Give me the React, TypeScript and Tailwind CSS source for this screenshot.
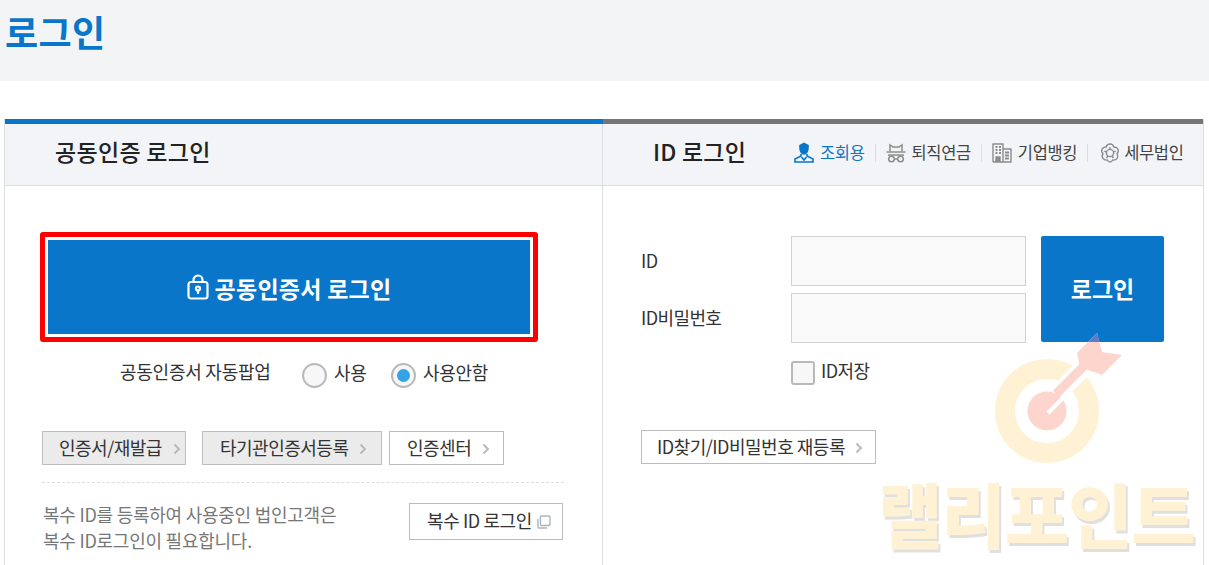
const font = "[font-family:'Noto_Sans_CJK_KR','Liberation_Sans',sans-serif]";

function Chevron() {
  return (
    <svg width="8" height="12" viewBox="0 0 8 12" className="mt-[2px] shrink-0" fill="none" stroke="#b4b8bd" strokeWidth="1.8">
      <path d="M1.5 1.5 6 6l-4.500 4.500" />
    </svg>
  );
}

function LinkButton({ label, gray, className }: { label: string; gray?: boolean; className: string }) {
  return (
    <div className={`flex h-[34px] items-center border border-[#bdbdbd] text-[18px] tracking-[-0.5px] text-[#333] ${gray ? "bg-[#ebebeb]" : "bg-white"} ${className}`}>
      <span className="mb-[2px] whitespace-nowrap">{label}</span>
      <Chevron />
    </div>
  );
}

function Radio({ on, label, className }: { on?: boolean; label: string; className: string }) {
  return (
    <div className={`flex items-center gap-[7px] ${className}`}>
      <span className="mt-[3px] flex size-[25px] items-center justify-center rounded-full border-2 border-[#b9b9b9] bg-[#f7f7f7]">
        {on && <span className="size-[13px] rounded-full bg-[#36a3e6]" />}
      </span>
      <span className="mb-[3px] text-[18px] tracking-[-0.3px] text-[#333]">{label}</span>
    </div>
  );
}

function Divider() {
  return <span className="mx-[10px] h-[18px] w-px bg-[#dcdde0]" />;
}

export default function App() {
  return (
    <div className={`relative h-[565px] w-[1209px] overflow-hidden bg-white ${font}`}>
      <header className="h-[81px] bg-[#f3f4f6] pl-[5px] pt-[8px] text-[36px] font-bold leading-[46px] tracking-[0.4px] text-[#0976c9]">
        로그인
      </header>

      <main className="ml-[4px] mt-[38px] h-[446px] w-[1200px] border-x border-[#dcdde0]">
        <div className="flex h-[5px]">
          <div className="w-[598px] bg-[#0976c9]" />
          <div className="flex-1 bg-[#757575]" />
        </div>
        <div className="flex h-[62px] border-b border-[#dcdde0] bg-[#f3f4f7]">
          <div className="flex w-[598px] items-center border-r border-[#dcdde0] pb-[7px] pl-[50px] text-[23px] font-medium tracking-[0.3px] text-[#222]">
            공동인증 로그인
          </div>
          <div className="flex flex-1 items-center pb-[4px] pl-[50px]">
            <span className="mb-[3px] w-[141px] text-[23px] font-medium tracking-[0.2px] text-[#222]">ID 로그인</span>
            <div className="flex items-center text-[16.500px] tracking-[-0.35px] text-[#444]">
              <span className="flex items-center gap-[6px] text-[#0976c9]">
                <svg width="20" height="21" viewBox="0 0 20 21" fill="none" stroke="#0976c9" strokeWidth="1.6">
                  <path d="M6 6V3.500L10 1.500 14 3.500V6c0 3-1.500 6-4 6S6 9 6 6Z" fill="#0976c9" />
                  <path d="M7 12v2l-6 3v3h18v-3l-6-3v-2" />
                  <path d="M7.500 15 10 18l2.500-3" />
                </svg>
                조회용
              </span>
              <Divider />
              <span className="flex items-center gap-[6px]">
                <svg width="20" height="20" viewBox="0 0 20 20" fill="none" stroke="#8c8c8c" strokeWidth="1.500">
                  <path d="M4 8V2l3 2h6l3-2v6" />
                  <path d="M0.500 9h19M2 12h16" />
                  <circle cx="5.500" cy="16" r="2.800" />
                  <circle cx="14.500" cy="16" r="2.800" />
                  <path d="M8.300 16h3.400" />
                </svg>
                퇴직연금
              </span>
              <Divider />
              <span className="flex items-center gap-[6px]">
                <svg width="20" height="20" viewBox="0 0 20 20" fill="none" stroke="#8c8c8c" strokeWidth="1.400">
                  <path d="M1 19V1h10v18M11 6h8v13H1" />
                  <path d="M3.500 4h2M7 4h2M3.500 7h2M7 7h2M3.500 10h2M7 10h2M13 9.500h4M13 12.500h4M13 15.500h4" strokeWidth="1.800" />
                  <path d="M4 19v-5h4v5" fill="#8c8c8c" />
                </svg>
                기업뱅킹
              </span>
              <Divider />
              <span className="ml-[2px] flex items-center gap-[4px]">
                <svg width="20" height="20" viewBox="0 0 20 20" fill="none" stroke="#8c8c8c" strokeWidth="1.400">
                  <path d="M10 1c2 0 3.400 1.200 3.800 3 1.800-.2 3.400.6 4.200 2.300.7 1.700.2 3.300-1 4.500 1 1.400 1.100 3.100.1 4.600-1.100 1.500-2.700 2-4.400 1.600C12 18.500 11 19 10 19s-2-.5-2.700-2c-1.700.4-3.300-.1-4.400-1.600-1-1.500-.9-3.200.1-4.600-1.200-1.200-1.700-2.800-1-4.500C2.800 4.600 4.400 3.800 6.200 4 6.600 2.200 8 1 10 1Z" />
                  <circle cx="10" cy="10" r="3.600" />
                  <path d="M10 6.400V4M13.400 9l2.300-.8M12.100 13l1.400 2M7.900 13l-1.400 2M6.600 9l-2.300-.8" />
                </svg>
                세무법인
              </span>
            </div>
          </div>
        </div>

        <div className="flex h-[379px]">
          <section className="w-[598px] border-r border-[#dcdde0] pl-[35px] pr-[38px] pt-[46px]">
            <div className="flex h-[110px] w-[498px] items-center justify-center gap-[6px] rounded-[3px] border-[5px] border-[#ff0000] bg-[#0976c9] text-[23px] font-bold tracking-[0.25px] text-white shadow-[inset_0_0_0_3px_#ffffff]">
              <svg width="22" height="26" viewBox="0 0 22 26" fill="none" stroke="#ffffff" strokeWidth="2.200">
                <rect x="1.500" y="8" width="19" height="16.500" rx="2.500" />
                <path d="M6.500 8V6a4.500 4.500 0 0 1 9 0v2" />
                <circle cx="11" cy="14.500" r="2" />
                <path d="M11 16.500v3.500" />
              </svg>
              <span className="pt-[2px]">공동인증서 로그인</span>
            </div>

            <div className="mt-[10px] flex h-[44px] items-center">
              <span className="mb-[5px] ml-[80px] w-[182px] whitespace-nowrap text-[18px] tracking-[-0.25px] text-[#333]">공동인증서 자동팝업</span>
              <Radio label="사용" className="w-[89px]" />
              <Radio on label="사용안함" className="" />
            </div>

            <div className="ml-[2px] mt-[35px] flex">
              <LinkButton gray label="인증서/재발급" className="w-[144px] gap-[11px] pl-[16px]" />
              <LinkButton gray label="타기관인증서등록" className="ml-[16px] w-[180px] gap-[11px] pl-[17px]" />
              <LinkButton label="인증센터" className="ml-[7px] w-[115px] gap-[11px] pl-[17px]" />
            </div>

            <div className="ml-[2px] mt-[17px] w-[522px] border-t border-dashed border-[#dddddd]" />

            <div className="ml-[3px] mt-[20px] flex w-[520px] justify-between">
              <p className="mt-[-2px] text-[18px] leading-[26px] tracking-[-0.25px] text-[#777]">
                복수 ID를 등록하여 사용중인 법인고객은
                <br />
                복수 ID로그인이 필요합니다.
              </p>
              <div className="flex h-[37px] w-[154px] items-center gap-[5px] border border-[#bdbdbd] bg-white pl-[17px] text-[18px] tracking-[-0.4px] text-[#333]">
                <span className="mb-[2px]">복수 ID 로그인</span>
                <svg width="14" height="14" viewBox="0 0 14 14" fill="none" stroke="#a9b4bf" strokeWidth="1.400">
                  <rect x="3.500" y="1" width="9.500" height="9.500" rx="1" />
                  <path d="M1 4v8a1 1 0 0 0 1 1h8" />
                </svg>
              </div>
            </div>
          </section>

          <section className="flex-1 pl-[38px] pt-[50px]">
            <div className="flex">
              <div className="w-[150px] text-[18px] tracking-[-0.6px] text-[#333]">
                <div className="flex h-[50px] items-center pb-[2px]">ID</div>
                <div className="mt-[7px] flex h-[50px] items-center pb-[2px]">ID비밀번호</div>
              </div>
              <div className="flex w-[235px] flex-col gap-[7px]">
                <div className="h-[50px] border border-[#d2d2d2] bg-[#f9f9f9]" />
                <div className="h-[50px] border border-[#d2d2d2] bg-[#f9f9f9]" />
              </div>
              <div className="ml-[15px] flex h-[106px] w-[123px] items-center justify-center rounded-[2px] bg-[#0976c9] pb-[2px] text-[23px] font-bold text-white">
                로그인
              </div>
            </div>
            <div className="ml-[150px] mt-[14px] flex items-center gap-[6px]">
              <span className="size-[24px] rounded-[3px] border-2 border-[#b9b9b9] bg-[#f7f7f7]" />
              <span className="mb-[5px] text-[18px] tracking-[-0.6px] text-[#333]">ID저장</span>
            </div>
            <LinkButton label="ID찾기/ID비밀번호 재등록" className="mt-[41px] w-[235px] gap-[10px] pl-[15px]" />
          </section>
        </div>
      </main>

      <svg width="140" height="140" viewBox="0 0 140 140" fill="none" className="absolute left-[990px] top-[328px]">
        <circle cx="57" cy="83" r="42" stroke="#fff2d4" strokeWidth="20" />
        <path d="M72 60 96 36" stroke="#ffffff" strokeWidth="16" />
        <circle cx="57" cy="83" r="19.500" fill="#fed5cc" />
        <path d="M66 66 100 32" stroke="#fed5cc" strokeWidth="9" />
        <path d="M58 85 97 46" stroke="#ffffff" strokeWidth="4" />
        <path d="M107 5 87 25l3 14 22 8 20-20-20-3Z" fill="#fed5cc" />
        <path d="M107 5 98 14H109.500Z" fill="#5f7cc2" />
      </svg>
      <div className="absolute left-[878px] top-[468px] whitespace-nowrap text-[70px] font-black leading-[90px] tracking-[-1px] text-[#fff2d4] [text-shadow:2px_3px_0_#e0e0e0]">
        랠리포인트
      </div>
    </div>
  );
}
